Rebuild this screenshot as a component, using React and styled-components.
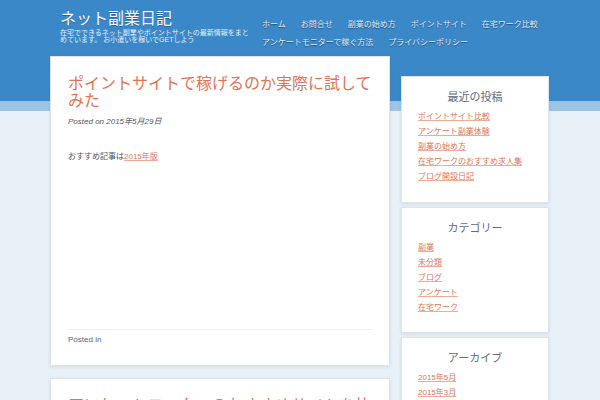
import React from "react";
import styled, { createGlobalStyle } from "styled-components";

const Global = createGlobalStyle`
  html, body { margin: 0; padding: 0; }
  body {
    font-family: "Liberation Sans", "Noto Sans CJK JP", sans-serif;
    background: linear-gradient(to bottom, #3b88c9 0, #3b88c9 101px, #9dc3e5 101px, #9dc3e5 111px, #e8f0f8 111px);
    min-height: 400px;
    overflow: hidden;
  }
`;

const Page = styled.div`
  width: 500px;
  margin-left: 50px;
`;

const Header = styled.header`
  height: 56px;
  display: flex;
  padding: 0 10px;
  box-sizing: border-box;
`;

const Brand = styled.div`
  width: 192px;
  padding-top: 10px;
`;

const SiteTitle = styled.a`
  display: block;
  font-size: 16px;
  line-height: 18px;
  color: #f4f8fc;
  text-decoration: none;
  text-shadow: 0 1px 0 rgba(0, 0, 0, 0.25);
`;

const Tagline = styled.p`
  margin: 1px 0 0;
  font-size: 7px;
  line-height: 7px;
  color: #e6eef7;
`;

const Nav = styled.nav`
  flex: 1;
  display: flex;
  flex-wrap: wrap;
  column-gap: 15px;
  align-content: flex-start;
  padding-top: 16px;
  margin-left: 10px;
`;

const NavItem = styled.a`
  font-size: 8px;
  line-height: 18px;
  color: #e3eaf3;
  text-decoration: none;
  text-shadow: 0 1px 1px rgba(0, 0, 0, 0.45);
  white-space: nowrap;
`;

const Columns = styled.div`
  display: grid;
  grid-template-columns: 340px 148px;
  column-gap: 11px;
  align-items: start;
`;

const Main = styled.main`
  display: flex;
  flex-direction: column;
  gap: 12px;
`;

const Card = styled.article`
  background: #fff;
  border: 1px solid #dde4ec;
  box-shadow: 0 1px 3px rgba(60, 90, 130, 0.14);
  padding: 18px 17px 20px;
  box-sizing: border-box;
`;

const PostTitle = styled.h1`
  margin: 0;
  font-size: 16px;
  line-height: 17px;
  font-weight: normal;
  color: #e37356;
`;

const Meta = styled.div`
  margin-top: 8px;
  font-size: 8px;
  line-height: 10px;
  font-style: italic;
  color: #4f566c;
`;

const Content = styled.div`
  height: 202px;
  padding-top: 25px;
  box-sizing: border-box;
  font-size: 8px;
  line-height: 10px;
  color: #4f566c;
`;

const TextLink = styled.a`
  color: #e37356;
  text-decoration: underline;
  text-decoration-color: #f1aa95;
`;

const Footer = styled.footer`
  border-top: 1px solid #eceff3;
  padding-top: 5px;
  font-size: 8px;
  line-height: 10px;
  color: #5c6378;
`;

const Sidebar = styled.aside`
  margin-top: 20px;
  display: flex;
  flex-direction: column;
  gap: 4px;
`;

const Widget = styled.section`
  background: #fff;
  border: 1px solid #dde4ec;
  box-shadow: 0 1px 3px rgba(60, 90, 130, 0.14);
  padding: 13px 16px 16px;
  box-sizing: border-box;
  min-height: ${(p) => p.$height || 0}px;
`;

const WidgetTitle = styled.h3`
  margin: 0 0 5px;
  text-align: center;
  font-size: 11px;
  line-height: 14px;
  font-weight: normal;
  color: #616a7e;
`;

const List = styled.ul`
  list-style: none;
  margin: 0;
  padding: 0;
`;

const Item = styled.li`
  font-size: 8px;
  line-height: 15px;
`;

const recent = [
  "ポイントサイト比較",
  "アンケート副業体験",
  "副業の始め方",
  "在宅ワークのおすすめ求人集",
  "ブログ開設日記",
];
const cats = ["副業", "未分類", "ブログ", "アンケート", "在宅ワーク"];
const archives = ["2015年5月", "2015年3月"];
const nav = [
  "ホーム",
  "お問合せ",
  "副業の始め方",
  "ポイントサイト",
  "在宅ワーク比較",
  "アンケートモニターで稼ぐ方法",
  "プライバシーポリシー",
];

export default function App() {
  return (
    <>
      <Global />
      <Page>
        <Header>
          <Brand>
            <SiteTitle href="#">ネット副業日記</SiteTitle>
            <Tagline>
              在宅でできるネット副業やポイントサイトの最新情報をまとめています。 お小遣いを稼いでGETしよう
            </Tagline>
          </Brand>
          <Nav>
            {nav.map((n) => (
              <NavItem key={n} href="#">
                {n}
              </NavItem>
            ))}
          </Nav>
        </Header>
        <Columns>
          <Main>
            <Card>
              <PostTitle>ポイントサイトで稼げるのか実際に試してみた</PostTitle>
              <Meta>Posted on 2015年5月29日</Meta>
              <Content>
                おすすめ記事は<TextLink href="#">2015年版</TextLink>
              </Content>
              <Footer>Posted in</Footer>
            </Card>
            <Card>
              <PostTitle>アンケートモニターのおすすめサイトを比較してみた</PostTitle>
            </Card>
          </Main>
          <Sidebar>
            <Widget $height={127}>
              <WidgetTitle>最近の投稿</WidgetTitle>
              <List>
                {recent.map((r) => (
                  <Item key={r}>
                    <TextLink href="#">{r}</TextLink>
                  </Item>
                ))}
              </List>
            </Widget>
            <Widget $height={126}>
              <WidgetTitle>カテゴリー</WidgetTitle>
              <List>
                {cats.map((r) => (
                  <Item key={r}>
                    <TextLink href="#">{r}</TextLink>
                  </Item>
                ))}
              </List>
            </Widget>
            <Widget>
              <WidgetTitle>アーカイブ</WidgetTitle>
              <List>
                {archives.map((r) => (
                  <Item key={r}>
                    <TextLink href="#">{r}</TextLink>
                  </Item>
                ))}
              </List>
            </Widget>
          </Sidebar>
        </Columns>
      </Page>
    </>
  );
}
